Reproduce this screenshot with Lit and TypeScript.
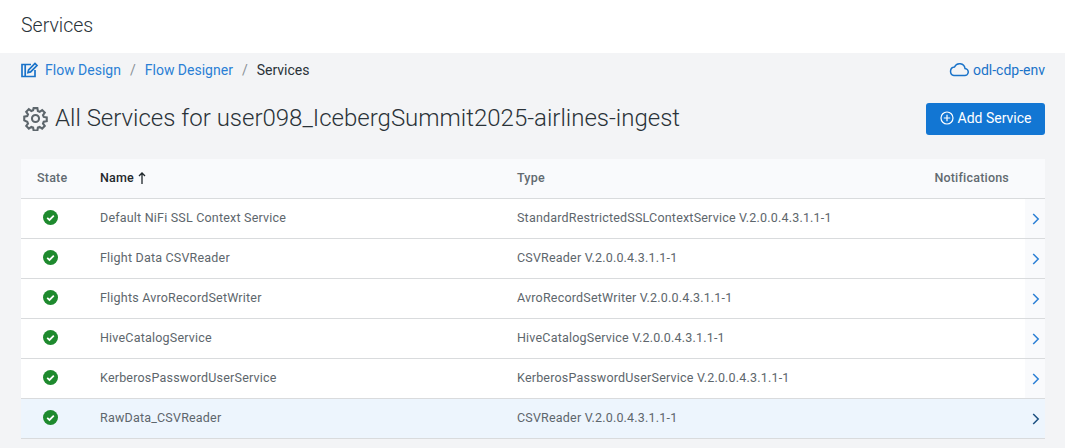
import { LitElement, html, css, svg } from 'lit';
import { customElement } from 'lit/decorators.js';

const services = [
  ['Default NiFi SSL Context Service', 'StandardRestrictedSSLContextService V.2.0.0.4.3.1.1-1'],
  ['Flight Data CSVReader', 'CSVReader V.2.0.0.4.3.1.1-1'],
  ['Flights AvroRecordSetWriter', 'AvroRecordSetWriter V.2.0.0.4.3.1.1-1'],
  ['HiveCatalogService', 'HiveCatalogService V.2.0.0.4.3.1.1-1'],
  ['KerberosPasswordUserService', 'KerberosPasswordUserService V.2.0.0.4.3.1.1-1'],
  ['RawData_CSVReader', 'CSVReader V.2.0.0.4.3.1.1-1'],
];

const checkIcon = svg`<svg width="15" height="15" viewBox="0 0 15 15"><circle cx="7.5" cy="7.5" r="7.5" fill="#1e8a2e"/><path d="M4.2 7.800l2.300 2.100 4.300-4.200" fill="none" stroke="#fff" stroke-width="1.800"/></svg>`;
const chevron = svg`<svg width="8" height="12" viewBox="0 0 8 12"><path d="M1.200 1l5 5-5 5" fill="none" stroke="currentColor" stroke-width="1.500"/></svg>`;

@customElement('app-root')
export class AppRoot extends LitElement {
  static styles = css`
    :host {
      display: block;
      width: 1065px;
      height: 448px;
      overflow: hidden;
      background: #f3f4f6;
      font-family: Roboto, 'Noto Sans', sans-serif;
      color: #2a3238;
    }
    .topbar {
      height: 53px;
      box-sizing: border-box;
      background: #fff;
      padding: 0 21px 3px;
      display: flex;
      align-items: center;
      font-size: 19.500px;
      font-weight: 300;
      color: #2a3238;
    }
    .content {
      padding: 0 20px 0 21px;
    }
    .crumbs {
      height: 35px;
      padding-bottom: 2px;
      box-sizing: border-box;
      display: flex;
      align-items: center;
      font-size: 14px;
    }
    .crumbs a {
      color: #2a7fd5;
      display: flex;
      align-items: center;
      gap: 6px;
    }
    .sep {
      color: #8a9197;
      margin: 0 9px;
    }
    .current {
      color: #2a3238;
    }
    .env {
      margin-left: auto;
      display: flex;
      align-items: center;
      gap: 4px;
      color: #1a73c9;
    }
    .heading {
      display: flex;
      align-items: center;
      justify-content: space-between;
      height: 32px;
      margin-top: 15px;
    }
    .heading h1 {
      margin: 0 0 2px 2px;
      font-size: 24px;
      font-weight: 300;
      color: #2a3238;
      display: flex;
      align-items: center;
      gap: 7px;
    }
    .add {
      width: 119px;
      height: 32px;
      border: 0;
      border-radius: 3px;
      background: #1276d3;
      color: #fff;
      font: 400 14px Roboto, sans-serif;
      display: flex;
      align-items: center;
      justify-content: center;
      gap: 4px;
      padding: 0 0 2px;
    }
    .table {
      margin-top: 24px;
      background: #fff;
      font-size: 12.500px;
      letter-spacing: 0.2px;
      color: #5d666c;
    }
    .row {
      display: grid;
      grid-template-columns: 79px 417px 1fr 20px;
      height: 40px;
      box-sizing: border-box;
      border-bottom: 1px solid #d9dbdd;
      align-items: center;
    }
    .row.head {
      grid-template-columns: 79px 417px 1fr auto;
      background: #f9fafc;
      font-weight: 500;
      color: #626a70;
    }
    .row.selected {
      background: #edf5fd;
    }
    .row > div {
      height: 100%;
      box-sizing: border-box;
      padding-bottom: 2px;
      display: flex;
      align-items: center;
    }
    .row > .state {
      padding-left: 21.500px;
    }
    .head > .state {
      padding-left: 16px;
    }
    .sorted {
      color: #1f272c;
      gap: 4px;
    }
    .row > .notif {
      padding-right: 36px;
    }
    .row > .go {
      justify-content: center;
      padding: 1px 0 0 1px;
      background: #f9fafc;
      color: #2a7fd5;
    }
    .selected > .go {
      background: transparent;
      color: #1b4f80;
    }
  `;

  render() {
    return html`
      <div class="topbar">Services</div>
      <div class="content">
        <nav class="crumbs">
          <a>
            <svg width="18" height="16" viewBox="0 0 18 16" fill="none" stroke="#1a73c9" stroke-width="1.700">
              <path d="M10 2.500H1v12h13V8M4.200 2.500v12" />
              <path d="M7 10.500l.6-2.600L14 1.500l2 2-6.400 6.400z" />
            </svg>
            Flow Design
          </a>
          <span class="sep">/</span>
          <a>Flow Designer</a>
          <span class="sep">/</span>
          <span class="current">Services</span>
          <span class="env">
            <svg width="20" height="15" viewBox="0 0 20 15" fill="none" stroke="#1a73c9" stroke-width="1.500">
              <path d="M5 13.500h10.500a3.500 3.500 0 0 0 .5-7A5.500 5.500 0 0 0 5.500 5 4.300 4.300 0 0 0 5 13.500z" />
            </svg>
            odl-cdp-env
          </span>
        </nav>
        <div class="heading">
          <h1>
            <svg width="25" height="25" viewBox="0 0 24 24" fill="none" stroke="#5d666c" stroke-width="2">
              <circle cx="12" cy="12" r="3.400" />
              <path d="M10.200 2h3.600l.5 2.900 1.700.7 2.400-1.700 2.500 2.500-1.700 2.400.7 1.700 2.900.5v3.600l-2.900.5-.7 1.700 1.700 2.400-2.500 2.500-2.400-1.700-1.700.7-.5 2.900h-3.600l-.5-2.900-1.700-.7-2.400 1.700-2.500-2.500 1.700-2.400-.7-1.700L1.200 13.800v-3.600l2.900-.5.7-1.700-1.700-2.400 2.500-2.500 2.400 1.700 1.700-.7z" />
            </svg>
            All Services for user098_IcebergSummit2025-airlines-ingest
          </h1>
          <button class="add">
            <svg width="14" height="14" viewBox="0 0 14 14" fill="none" stroke="#fff" stroke-width="1.200">
              <circle cx="7" cy="7" r="6" />
              <path d="M7 3.800v6.400M3.800 7h6.400" />
            </svg>
            Add Service
          </button>
        </div>
        <div class="table">
          <div class="row head">
            <div class="state">State</div>
            <div class="sorted">
              Name
              <svg width="8" height="12" viewBox="0 0 8 12" fill="none" stroke="#1f272c" stroke-width="1.300">
                <path d="M4 12V1M1 4l3-3 3 3" />
              </svg>
            </div>
            <div>Type</div>
            <div class="notif">Notifications</div>
          </div>
          ${services.map(
            ([name, type], i) => html`
              <div class="row ${i === services.length - 1 ? 'selected' : ''}">
                <div class="state">${checkIcon}</div>
                <div>${name}</div>
                <div>${type}</div>
                <div class="go">${chevron}</div>
              </div>
            `,
          )}
        </div>
      </div>
    `;
  }
}
